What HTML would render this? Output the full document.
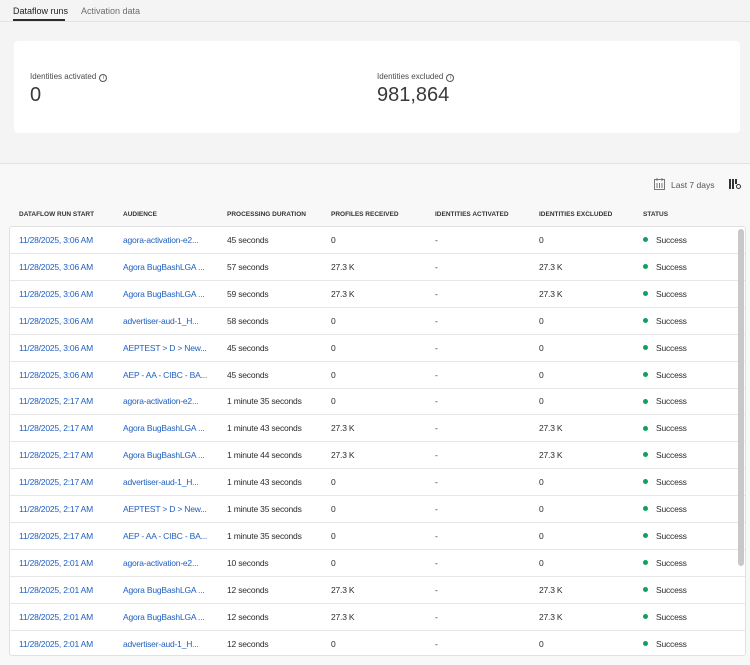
<!DOCTYPE html>
<html><head><style>
*{margin:0;padding:0;box-sizing:border-box}
body{width:750px;height:665px;overflow:hidden;background:#f8f8f8;font-family:"Liberation Sans",sans-serif;color:#2c2c2c;position:relative}
.top{position:absolute;left:0;top:0;width:750px;height:164px;background:#f4f4f4;border-bottom:1px solid #e3e3e3}
.tabs{position:absolute;left:0;top:0;width:750px;height:22px;border-bottom:1px solid #e2e2e2}
.tab{position:absolute;top:6px;font-size:9px}
.ul{position:absolute;left:13px;top:19px;width:52px;height:2px;background:#2c2c2c}
.card{position:absolute;left:14px;top:41px;width:726px;height:92px;background:#fff;border-radius:4px}
.lbl{position:absolute;top:31px;font-size:8px;color:#4b4b4b}
.val{position:absolute;top:43px;font-size:20px;color:#3a3a3a}
.i{display:inline-block;width:8px;height:8px;border:1px solid #555;border-radius:50%;font-size:5px;text-align:center;line-height:6px;vertical-align:0;margin-left:3px}
.h{position:absolute;top:211px;font-size:6.5px;font-weight:bold;color:#333}
.tbl{position:absolute;left:9px;top:226px;width:737px;height:430px;background:#fff;border:1px solid #e1e1e1;border-radius:3px;overflow:hidden}
.row{position:absolute;left:0;width:735px;height:27px;border-bottom:1px solid #e6e6e6;font-size:8.5px;letter-spacing:-0.2px}
.row span{position:absolute;top:8px;white-space:nowrap}
.a{color:#1f5fbf}
.dot{display:inline-block;width:5px;height:5px;border-radius:50%;background:#12a05c;margin-right:8px;vertical-align:middle;position:relative;top:-1px}
.sb{position:absolute;left:728px;top:2px;width:6px;height:337px;background:#c8c8c8;border-radius:3px}
</style></head><body>
<div class="top">
<div class="tabs"><div class="tab" style="left:13px;color:#222">Dataflow runs</div><div class="tab" style="left:81px;color:#6e6e6e">Activation data</div><div class="ul"></div></div>
<div class="card">
<div class="lbl" style="left:16px">Identities activated<span class="i">i</span></div>
<div class="val" style="left:16px">0</div>
<div class="lbl" style="left:363px">Identities excluded<span class="i">i</span></div>
<div class="val" style="left:363px">981,864</div>
</div></div>
<svg style="position:absolute;left:654px;top:178px" width="11" height="12" viewBox="0 0 11 12"><rect x="0.5" y="1.5" width="10" height="10" fill="none" stroke="#777"/><path d="M3 0v3M8 0v3M3 5v5M5.5 5v5M8 5v5" stroke="#777"/></svg>
<div style="position:absolute;left:671px;top:180px;font-size:8.5px;color:#555">Last 7 days</div>
<svg style="position:absolute;left:729px;top:178px" width="13" height="12" viewBox="0 0 13 12"><path d="M1 1v10M4 1v10M7 1v5" stroke="#333" stroke-width="2"/><circle cx="9.5" cy="8.5" r="2" fill="none" stroke="#333"/></svg>
<div class="h" style="left:19px">DATAFLOW RUN START</div>
<div class="h" style="left:123px">AUDIENCE</div>
<div class="h" style="left:227px">PROCESSING DURATION</div>
<div class="h" style="left:331px">PROFILES RECEIVED</div>
<div class="h" style="left:435px">IDENTITIES ACTIVATED</div>
<div class="h" style="left:539px">IDENTITIES EXCLUDED</div>
<div class="h" style="left:643px">STATUS</div>
<div class="tbl" id="t"><div class="sb"></div></div>
<script>
var d=[["11/28/2025, 3:06 AM","agora-activation-e2...","45 seconds","0","0"],
["11/28/2025, 3:06 AM","Agora BugBashLGA ...","57 seconds","27.3 K","27.3 K"],
["11/28/2025, 3:06 AM","Agora BugBashLGA ...","59 seconds","27.3 K","27.3 K"],
["11/28/2025, 3:06 AM","advertiser-aud-1_H...","58 seconds","0","0"],
["11/28/2025, 3:06 AM","AEPTEST > D > New...","45 seconds","0","0"],
["11/28/2025, 3:06 AM","AEP - AA - CIBC - BA...","45 seconds","0","0"],
["11/28/2025, 2:17 AM","agora-activation-e2...","1 minute 35 seconds","0","0"],
["11/28/2025, 2:17 AM","Agora BugBashLGA ...","1 minute 43 seconds","27.3 K","27.3 K"],
["11/28/2025, 2:17 AM","Agora BugBashLGA ...","1 minute 44 seconds","27.3 K","27.3 K"],
["11/28/2025, 2:17 AM","advertiser-aud-1_H...","1 minute 43 seconds","0","0"],
["11/28/2025, 2:17 AM","AEPTEST > D > New...","1 minute 35 seconds","0","0"],
["11/28/2025, 2:17 AM","AEP - AA - CIBC - BA...","1 minute 35 seconds","0","0"],
["11/28/2025, 2:01 AM","agora-activation-e2...","10 seconds","0","0"],
["11/28/2025, 2:01 AM","Agora BugBashLGA ...","12 seconds","27.3 K","27.3 K"],
["11/28/2025, 2:01 AM","Agora BugBashLGA ...","12 seconds","27.3 K","27.3 K"],
["11/28/2025, 2:01 AM","advertiser-aud-1_H...","12 seconds","0","0"]];
var h="";d.forEach(function(r,i){h+='<div class="row" style="top:'+(i*26.9)+'px"><span class="a" style="left:9px">'+r[0]+'</span><span class="a" style="left:113px">'+r[1].replace(/>/g,"&gt;")+'</span><span style="left:217px">'+r[2]+'</span><span style="left:321px">'+r[3]+'</span><span style="left:425px">-</span><span style="left:529px">'+r[4]+'</span><span style="left:633px"><i class="dot"></i>Success</span></div>'});
document.getElementById("t").insertAdjacentHTML("afterbegin",h);
</script>
</body></html>
